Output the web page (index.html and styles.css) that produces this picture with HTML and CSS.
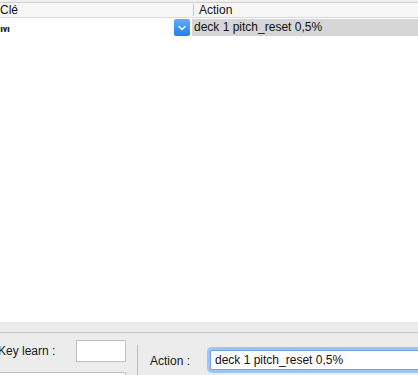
FILE: index.html
```html
<!DOCTYPE html>
<html lang="fr">

<head>
    <meta charset="UTF-8">
    <meta name="viewport" content="width=device-width, initial-scale=1.0">
    <title>Mapping</title>
    <link rel="stylesheet" href="styles.css">
</head>

<body>
    <div class="window">
        <div class="table">
            <div class="head">
                <div class="head-key">Clé</div>
                <div class="head-action">Action</div>
            </div>
            <div class="row">
                <div class="cell-key">
                    <span class="clip"><span class="clip-text">M</span></span>
                </div>
                <div class="combo-btn">
                    <svg width="16" height="17" viewBox="0 0 16 17">
                        <path d="M5 7.5 L8 10.5 L11 7.5" fill="none" stroke="#fff" stroke-width="1.5" stroke-linecap="round" stroke-linejoin="round" />
                    </svg>
                </div>
                <div class="cell-action">deck 1 pitch_reset 0,5%</div>
            </div>
        </div>

        <div class="panel">
            <div class="rule"></div>
            <div class="controls">
                <div class="left">
                    <div class="field">
                        <span class="label">Key learn :</span>
                        <input class="box small" type="text" readonly>
                    </div>
                    <input class="box wide" type="text" readonly>
                </div>
                <div class="sep"></div>
                <div class="right">
                    <span class="label action-label">Action :</span>
                    <input class="box focus" type="text" value="deck 1 pitch_reset 0,5%" readonly>
                </div>
            </div>
        </div>
    </div>
</body>

</html>
```

FILE: styles.css
```css
* {
    box-sizing: border-box;
}

body {
    margin: 0;
    background: #fff;
    font-family: "Liberation Sans", Arial, sans-serif;
    font-size: 12px;
    color: #111;
    overflow: hidden;
}

.window {
    display: flex;
    flex-direction: column;
    height: 375px;
}

.table {
    flex: 1;
    padding-top: 2px;
    background: linear-gradient(#f0f0f0 2px, #fff 2px);
}

.head {
    display: flex;
    height: 16px;
    border-top: 1px solid #cfcfcf;
    border-bottom: 1px solid #dadada;
    background: #f6f6f6;
    line-height: 15px;
}

.head-key {
    width: 193px;
}

.head-action {
    padding-left: 5px;
    border-left: 1px solid #cacaca;
    margin: 1px 0;
    line-height: 13px;
}

.row {
    display: flex;
    height: 19px;
    padding-top: 1px;
}

.cell-key {
    width: 174px;
}

.clip {
    display: inline-block;
    height: 6px;
    margin-top: 8px;
    overflow: hidden;
}

.clip-text {
    display: block;
    margin-top: -5px;
    line-height: 12px;
    font-weight: bold;
    color: #222;
}

.combo-btn {
    width: 16px;
    height: 17px;
    margin-right: 2px;
    border-radius: 2px;
    background: linear-gradient(#62adf8, #1f7ff0);
}

.combo-btn svg {
    display: block;
}

.cell-action {
    flex: 1;
    height: 17px;
    padding-left: 2px;
    background: #d6d6d6;
    line-height: 17px;
}

.panel {
    height: 53px;
    padding-top: 10px;
    background: #ececec;
    overflow: hidden;
}

.rule {
    border-top: 1px solid #c4c4c4;
}

.controls {
    display: flex;
    align-items: flex-start;
    height: 60px;
}

.left {
    width: 139px;
    margin-left: -2px;
    padding-top: 7px;
}

.field {
    display: flex;
    align-items: center;
    justify-content: space-between;
    padding-right: 11px;
}

.label {
    color: #1a1a1a;
}

.box {
    display: block;
    border: 1px solid #c0c0c0;
    background: #fff;
    font-family: "Liberation Sans", Arial, sans-serif;
    font-size: 12px;
    color: #111;
    padding: 0 4px;
    outline: none;
}

.small {
    width: 50px;
    height: 22px;
}

.wide {
    width: 130px;
    height: 22px;
    margin-top: 10px;
    margin-left: -2px;
}

.sep {
    align-self: stretch;
    width: 1px;
    margin-top: 12px;
    background: #bdbdbd;
}

.right {
    flex: 1;
    display: flex;
    align-items: center;
    padding-left: 12px;
    padding-top: 17px;
}

.action-label {
    width: 60px;
    padding-top: 2px;
}

.focus {
    flex: 1;
    height: 20px;
    margin-right: -4px;
    border-color: #6fa3e6;
    box-shadow: 0 0 0 3px #9ec5f2;
    border-radius: 2px;
    padding-left: 4px;
}
```
